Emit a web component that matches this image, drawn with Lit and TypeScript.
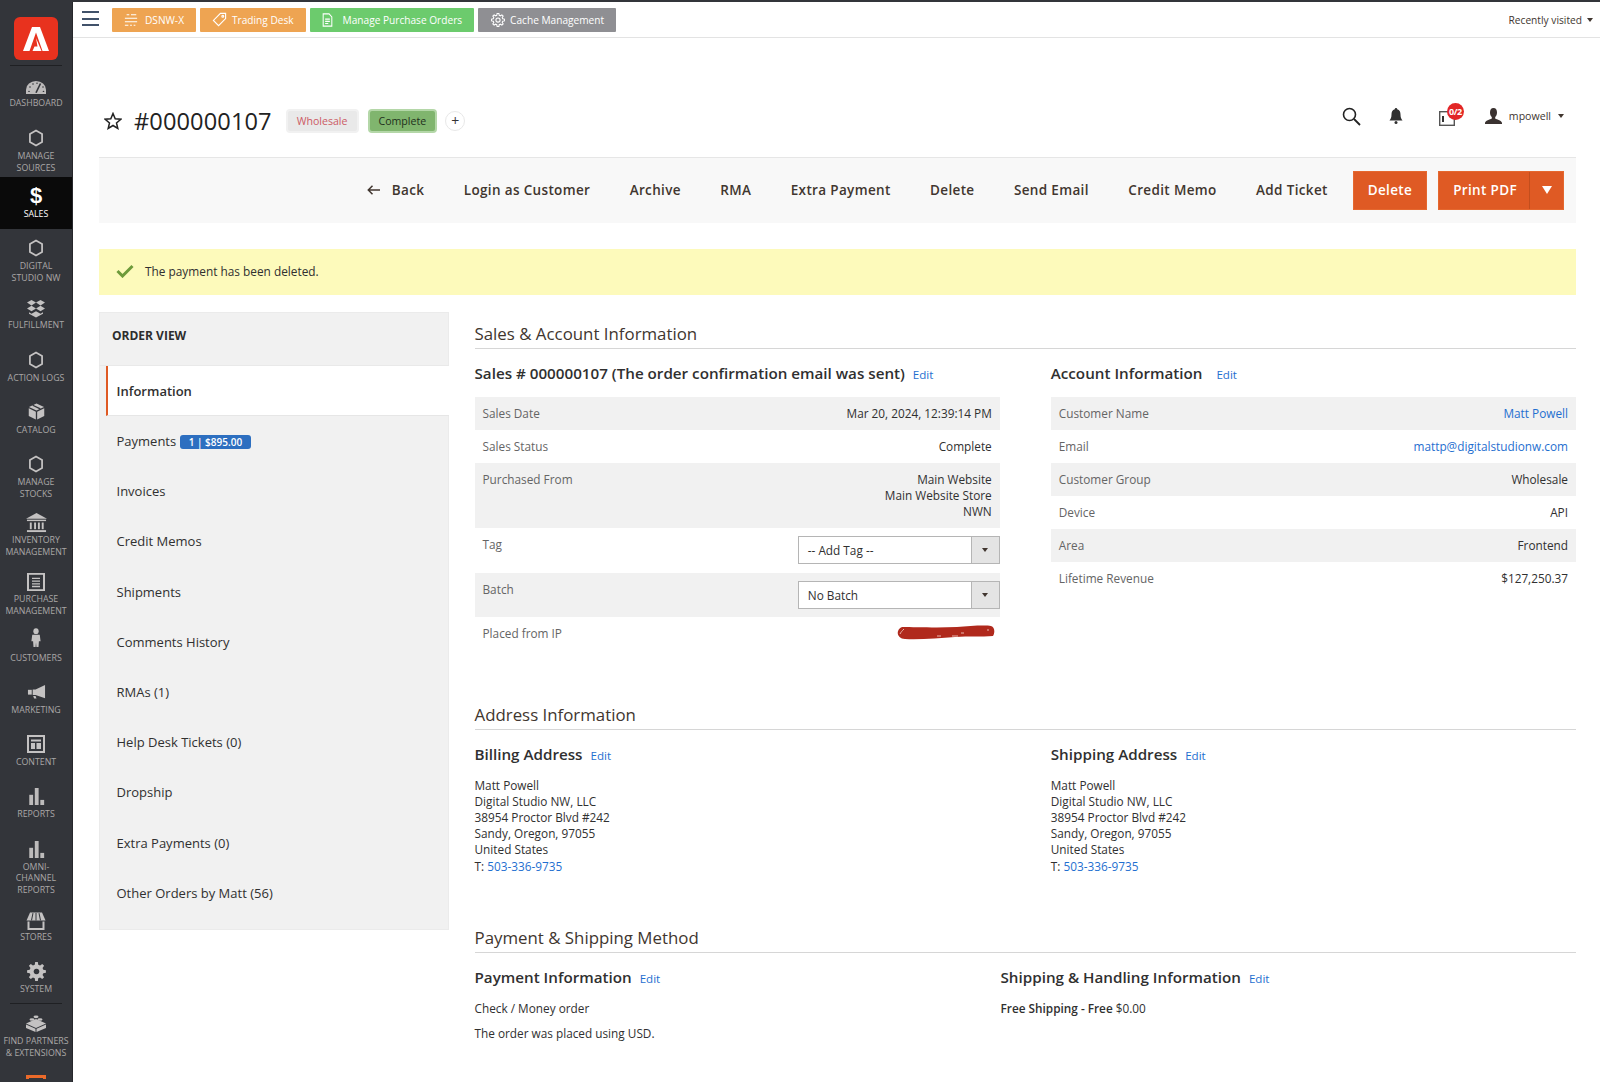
import { LitElement, html, css } from "lit";
import { customElement } from "lit/decorators.js";

const gearPath = (cx: number, cy: number, ro: number, ri: number, n: number) => {
  let d = "";
  for (let i = 0; i < n; i++) {
    const step = (Math.PI * 2) / n;
    const a = i * step - Math.PI / 2;
    const pts: [number, number][] = [
      [ri, a - step * 0.32],
      [ro, a - step * 0.18],
      [ro, a + step * 0.18],
      [ri, a + step * 0.32],
    ];
    for (const [r, t] of pts) {
      d += `${d ? "L" : "M"}${(cx + r * Math.cos(t)).toFixed(2)} ${(cy + r * Math.sin(t)).toFixed(2)} `;
    }
  }
  return d + "Z";
};

const hex = html`<svg width="16" height="18" viewBox="0 0 20 22"><path d="M10 1.600 17.600 6v10L10 20.400 2.400 16V6z" fill="none" stroke="#c4c2c2" stroke-width="2.200"/></svg>`;
const bars = html`<svg width="17" height="19" viewBox="0 0 20 22" fill="#bdbbbb"><rect x="1.500" y="9" width="4.500" height="12"/><rect x="8" y="1" width="4.500" height="20"/><rect x="14.500" y="15" width="4.500" height="6"/></svg>`;
const icons: Record<string, unknown> = {
  dashboard: html`<svg width="20" height="13" viewBox="0 0 20 15" preserveAspectRatio="none"><path d="M0 15V10A10 10 0 0 1 20 10V15z" fill="#bdbbbb"/><path d="M10 13.500 14.500 3" stroke="#33353a" stroke-width="1.600"/><g fill="#33353a"><circle cx="4" cy="7" r=".8"/><circle cx="7" cy="3.500" r=".8"/><circle cx="11" cy="2.500" r=".8"/><circle cx="17" cy="7" r=".8"/><circle cx="3" cy="12" r=".8"/><circle cx="17.500" cy="12" r=".8"/></g></svg>`,
  hex,
  dollar: html`<span class="dollar">$</span>`,
  fulfillment: html`<svg width="20" height="19" viewBox="0 0 20 20" preserveAspectRatio="none" fill="#c4c2c2"><path d="M5.500 1 10 3.800 5.500 6.800 1 3.800zM14.500 1 19 3.800 14.500 6.800 10 3.800zM5.500 7.200 10 10 5.500 13 1 10.100zM14.500 7.200 19 10.100 14.500 13 10 10z"/><path d="M3 14l2.500 1.500L10 13l4.500 2.500L17 14v1.500L10 19.500 3 15.500z"/></svg>`,
  cube: html`<svg width="17" height="17" viewBox="0 0 18 19" preserveAspectRatio="none" fill="#c4c2c2"><path d="M9 .5 17 4.500 9 8.500 1 4.500zM.8 5.800 8.300 9.700V18.500L.8 14.500zM17.200 5.800V14.500L9.700 18.500V9.700z"/><path d="M5 2.500 13 6.500" stroke="#33353a" stroke-width="1.500"/></svg>`,
  inventory: html`<svg width="21" height="20" viewBox="0 0 22 21" preserveAspectRatio="none" fill="#c4c2c2"><path d="M11 0 22 6H0z"/><rect x="1" y="7" width="20" height="1.500"/><rect x="4" y="10" width="2" height="7"/><rect x="8.500" y="10" width="2" height="7"/><rect x="12.500" y="10" width="2" height="7"/><rect x="16.500" y="10" width="2" height="7"/><rect x="1" y="18" width="20" height="2"/></svg>`,
  purchase: html`<svg width="18" height="18" viewBox="0 0 18 20" preserveAspectRatio="none"><rect x="1" y="1" width="16" height="18" fill="none" stroke="#c4c2c2" stroke-width="2"/><path d="M5 6h8M5 9h8M5 12h8M5 15h8" stroke="#c4c2c2" stroke-width="1.500"/></svg>`,
  customer: html`<svg width="10" height="20" viewBox="0 0 12 22" preserveAspectRatio="none" fill="#c4c2c2"><circle cx="6" cy="3.500" r="3.200"/><path d="M1.500 7.500h9l1 7H9.500L9 21H6.500L6 16 5.500 21H3L2.500 14.500H.5z"/></svg>`,
  marketing: html`<svg width="19" height="14" viewBox="0 0 20 16" preserveAspectRatio="none" fill="#c4c2c2"><path d="M19 0v15L9 11.500H6V5H9z"/><path d="M1 5.500h4V11H1z"/><path d="M6.500 12.500h2.500l1 3H7.500z"/></svg>`,
  content: html`<svg width="18" height="18" viewBox="0 0 18 18"><rect x="1" y="1" width="16" height="16" fill="none" stroke="#c4c2c2" stroke-width="2"/><path d="M4 4.500h10v2H4zM4 8h4v6H4zM9.500 8H14v6H9.500z" fill="#c4c2c2"/></svg>`,
  bars,
  stores: html`<svg width="20" height="18" viewBox="0 0 20 17" preserveAspectRatio="none"><path d="M4 .5h12L19.500 8H.5z" fill="#c4c2c2"/><path d="M7 1 5.500 8M10 1v7M13 1 14.500 8" stroke="#33353a" stroke-width="1"/><path d="M2.500 9v7h15V9" fill="none" stroke="#c4c2c2" stroke-width="2"/></svg>`,
  gear: html`<svg width="19" height="19" viewBox="0 0 20 20"><path fill-rule="evenodd" fill="#c4c2c2" d="${gearPath(10, 10, 10, 7.4, 8)} M10 7a3 3 0 1 0 .01 0z"/></svg>`,
  lego: html`<svg width="20" height="17" viewBox="0 0 20 19" preserveAspectRatio="none" fill="#c4c2c2"><path d="M10 4.500 20 9.500 10 14.500 0 9.500z"/><path d="M0 10.500 9.500 15.300V19L0 14.500zM20 10.500V14.500L10.500 19V15.300z"/><ellipse cx="6" cy="5" rx="2.500" ry="1.500"/><ellipse cx="14" cy="5" rx="2.500" ry="1.500"/><ellipse cx="10" cy="2" rx="2.500" ry="1.500"/></svg>`,
};

const iconGap: Record<string, number> = {
  dashboard: 4, hex: 4, dollar: 2, fulfillment: 2, cube: 5, inventory: 2, purchase: 3,
  customer: 5, marketing: 6, content: 4, bars: 3, stores: 2, gear: 3,
};

const nav: [string, string[], number, boolean?][] = [
  ["dashboard", ["DASHBOARD"], 46],
  ["hex", ["MANAGE", "SOURCES"], 65],
  ["dollar", ["SALES"], 52, true],
  ["hex", ["DIGITAL", "STUDIO NW"], 58],
  ["fulfillment", ["FULFILLMENT"], 47],
  ["hex", ["ACTION LOGS"], 53],
  ["cube", ["CATALOG"], 52],
  ["hex", ["MANAGE", "STOCKS"], 64],
  ["inventory", ["INVENTORY", "MANAGEMENT"], 58],
  ["purchase", ["PURCHASE", "MANAGEMENT"], 59],
  ["customer", ["CUSTOMERS"], 47],
  ["marketing", ["MARKETING"], 52],
  ["content", ["CONTENT"], 52],
  ["bars", ["REPORTS"], 52],
  ["bars", ["OMNI-", "CHANNEL", "REPORTS"], 76],
  ["stores", ["STORES"], 47],
  ["gear", ["SYSTEM"], 52],
];

const tabIcon = {
  list: html`<svg class="t-list" width="14" height="14" viewBox="0 0 16 16" stroke="#fff" stroke-width="1.300" fill="none"><path d="M3 2h3M8 2h6M1 6h14M1 10h14M1 14h4M7 14h2M11 14h2"/></svg>`,
  tag: html`<svg class="t-tag" width="15" height="15" viewBox="0 0 16 16" stroke="#fff" stroke-width="1.200" fill="none"><path d="M9 1.500h5.500V7L7 14.500 1.500 9z"/><circle cx="11.500" cy="4.500" r="1"/></svg>`,
  doc: html`<svg class="t-doc" width="11" height="14" viewBox="0 0 14 16" preserveAspectRatio="none" stroke="#fff" stroke-width="1.300" fill="none"><path d="M1.500 1h7.500l3.500 3.500V15h-11z"/><path d="M4 7h6M4 9.500h6M4 12h4"/></svg>`,
  gear: html`<svg class="t-gear" width="14" height="14" viewBox="0 0 16 16"><path fill="none" stroke="#fff" stroke-width="1.200" d="${gearPath(8, 8, 7.4, 5.6, 8)}"/><circle cx="8" cy="8" r="2.400" fill="none" stroke="#fff" stroke-width="1.200"/></svg>`,
};

@customElement("app-root")
export class AppRoot extends LitElement {
  static styles = css`
    :host { display: block; height: 1082px; overflow: hidden; font-family: "Open Sans", "Noto Sans", sans-serif; color: #303030; background: #fff; position: relative; }
    a { color: #1f6fd0; text-decoration: none; }
    .strip { height: 2px; background: #33353a; }
    .page { display: flex; height: 1080px; }
    .side { width: 73px; flex: none; background: #33353a; border-right: 1px solid #26272b; box-sizing: border-box; display: flex; flex-direction: column; align-items: stretch; overflow: hidden; }
    .logo-wrap { height: 64px; margin: 0 10px; padding-top: 15px; box-sizing: border-box; border-bottom: 1px solid #1f2023; display: flex; justify-content: center; flex: none; align-items: flex-start; }
    .logo { width: 44px; height: 43px; background: #e8321e; border-radius: 6px; display: flex; align-items: center; justify-content: center; }
    .nav-item { display: flex; flex-direction: column; align-items: center; justify-content: flex-end; padding-bottom: 3px; box-sizing: border-box; color: #aaa7a7; font-size: 8.800px; line-height: 11.500px; text-align: center; flex: none; white-space: nowrap; }
    .nav-item.active { background: #0a0a0a; color: #fff; padding-bottom: 9px; }
    .nav-item .ic { display: flex; align-items: center; justify-content: center; }
    .dollar { font-family: "Liberation Sans", sans-serif; font-size: 22px; font-weight: 700; color: #fff; line-height: 22px; }
    .rule { height: 1px; margin: 5px 10px 0; background: #1f2023; flex: none; }
    .orange-peek { width: 20px; height: 4px; border: 3px solid #eb6a2a; border-bottom: none; margin: 13px 0 0 26px; box-sizing: border-box; flex: none; }

    .main { flex: 1; min-width: 0; display: flex; flex-direction: column; }
    .topbar { height: 29px; border-bottom: 1px solid #e3e3e3; display: flex; align-items: flex-start; flex: none; padding: 6px 7px 0 9px; }
    .burger { width: 17px; height: 15px; margin: 3px 13px 0 0; flex: none; display: flex; flex-direction: column; justify-content: space-between; }
    .burger i { display: block; height: 2px; background: #41526a; }
    .tab { height: 24px; display: flex; align-items: center; padding: 0 12px 1px 12px; margin-right: 4px; color: #fff; font-size: 10.150px; border-radius: 1px; box-sizing: border-box; white-space: nowrap; }
    .tab.o { background: #eea452; }
    .tab.g { background: #6ccb6d; }
    .tab.n { background: #8f8f93; padding-left: 13px; }
    .t-list { margin-right: 7px; }
    .t-tag { margin-right: 5px; }
    .t-doc { margin-right: 10px; }
    .t-gear { margin-right: 5px; }
    .recent { margin-left: auto; font-size: 10.200px; color: #41362f; height: 24px; padding-bottom: 1px; box-sizing: border-box; display: flex; align-items: center; gap: 5px; white-space: nowrap; }
    .caret { display: inline-block; width: 0; height: 0; border: 3.500px solid transparent; border-top: 4px solid #41362f; border-bottom: none; }

    .content { padding: 0 24px 0 26px; flex: 1; min-height: 0; }
    .head { height: 119px; display: flex; align-items: flex-end; }
    .head-in { display: flex; align-items: center; height: 34px; width: 100%; margin-bottom: 19px; }
    .star { margin: 0 12px 0 5px; flex: none; }
    .h1 { font-size: 23.600px; color: #222; line-height: 34px; margin-right: 16px; letter-spacing: .1px; }
    .chip { height: 20px; font-size: 10.600px; display: flex; align-items: center; padding: 0 9px; box-sizing: border-box; border-radius: 2px; }
    .chip.w { background: #e9e9e9; color: #cc5b65; box-shadow: 0 0 0 2px #f1f1f1; margin-right: 13px; }
    .chip.c { background: #80b56e; color: #22301c; box-shadow: 0 0 0 2px #b4d7a8; margin-right: 10px; }
    .plus { width: 20px; height: 20px; border-radius: 50%; border: 1px solid #e8e8e8; display: flex; align-items: center; justify-content: center; font-size: 14px; color: #333; box-sizing: border-box; line-height: 1; }
    .tools { display: flex; align-items: center; height: 34px; margin: 0 12px 10px auto; }
    .msg-ic { position: relative; margin-right: 21px; width: 25px; height: 20px; }
    .badge { position: absolute; left: 8px; top: -3px; width: 17px; height: 17px; border-radius: 50%; background: #e22626; color: #fff; font-size: 9px; font-weight: 700; display: flex; align-items: center; justify-content: center; letter-spacing: -.5px; }
    .user { font-size: 10.600px; color: #41362f; margin: 0 7px 0 7px; }
    .i-search { margin-right: 28px; }
    .i-bell { margin-right: 36px; }
    .i-box { position: absolute; left: 0; top: 5px; }

    .actions { height: 66px; background: #f8f8f8; border-top: 1px solid #e6e6e6; display: flex; align-items: center; justify-content: flex-end; padding: 0 12px 1px 0; box-sizing: border-box; font-size: 13.500px; font-weight: 600; color: #41362f; letter-spacing: .35px; white-space: nowrap; }
    .actions .a { margin-right: 39.400px; display: flex; align-items: center; gap: 12px; }
    .actions .a.last { margin-right: 25px; }
    .btn { height: 39px; background: #df5a24; color: #fff; display: flex; align-items: center; border: 1px solid #e5682f; box-sizing: border-box; }
    .btn.del { padding: 0 14px; margin-right: 11px; }
    .btn.pdf span { padding: 0 12px 0 14px; line-height: 37px; border-right: 1px solid #c34e1d; }
    .btn.pdf b { width: 33px; display: flex; justify-content: center; }
    .tri { width: 0; height: 0; border: 5.500px solid transparent; border-top: 8px solid #fff; border-bottom: none; }

    .msg { margin-top: 26px; height: 46px; background: #fdfabb; display: flex; align-items: center; padding: 0 0 2px 17px; box-sizing: border-box; font-size: 11.850px; color: #303030; gap: 11px; }

    .cols { display: flex; margin-top: 17px; }
    .panel { width: 350px; height: 618px; background: #f1f1f1; box-shadow: 0 0 0 1px #ebebeb inset; flex: none; margin-right: 25.500px; }
    .panel-h { height: 54px; font-size: 12px; font-weight: 700; color: #2d2d2d; display: flex; align-items: center; padding: 0 0 6px 13px; border-bottom: 1px solid #e9e9e9; box-sizing: border-box; }
    .pi { height: 50.200px; display: flex; align-items: center; padding-left: 17.500px; font-size: 13px; color: #303030; gap: 4px; white-space: nowrap; }
    .pi.on { margin-left: 7px; padding-left: 8.500px; background: #fff; border-left: 2.500px solid #df5a24; font-weight: 600; border-bottom: 1px solid #e6e6e6; box-sizing: border-box; height: 50px; }
    .count { display: inline-block; background: #2d6fc0; color: #fff; font-size: 10px; font-weight: 600; line-height: 14px; padding: 0 8.500px; margin-top: 2px; border-radius: 3px; }

    .right { flex: 1; min-width: 0; }
    .sec { font-size: 16.850px; line-height: 24px; color: #41362f; border-bottom: 1px solid #d6d6d6; box-sizing: border-box; margin: 0; font-weight: 400; padding-top: 10px; height: 37px; }
    .row2 { display: flex; gap: 51px; margin-top: 12px; }
    .row2 > div { flex: 1 1 0; min-width: 0; }
    .r-top { height: 331.500px; }
    .r-addr { height: 174px; }
    .r-pay { gap: 0; }
    .r-pay > .pay-left { flex: none; width: 526px; }
    .sub { font-size: 15.200px; font-weight: 600; color: #303030; line-height: 24px; white-space: nowrap; }
    .sub a { font-size: 11.600px; font-weight: 400; margin-left: 4px; }
    .sub a.wide { margin-left: 10px; }
    .tbl { margin-top: 10px; font-size: 11.800px; color: #303030; }
    .tr { display: flex; justify-content: space-between; padding: 8px; line-height: 16.200px; box-sizing: border-box; }
    .tr:nth-child(odd) { background: #f1f1f1; }
    .tr .l { color: #656565; }
    .tr .v { text-align: right; }
    .sel { width: 202px; height: 28px; display: flex; border: 1px solid #b5b5b5; background: #fff; box-sizing: border-box; margin: 0 -8px 0 0; align-items: stretch; text-align: left; }
    .sel span { flex: 1; padding-left: 9px; line-height: 26px; }
    .sel i { width: 27px; background: #e4e4e4; border-left: 1px solid #b5b5b5; display: flex; align-items: center; justify-content: center; }
    .addr { font-size: 11.800px; line-height: 16.200px; margin-top: 9px; color: #303030; }
    .addr b { font-weight: 600; }
    .scrib { display: block; margin: 0 -3px 0 0; }
  `;

  private row(l: string, v: unknown, h: number) {
    return html`<div class="tr" style="height:${h}px"><span class="l">${l}</span><span class="v">${v}</span></div>`;
  }

  private address() {
    return html`<div class="addr">Matt Powell<br />Digital Studio NW, LLC<br />38954 Proctor Blvd #242<br />Sandy, Oregon, 97055<br />United States<br />T: <a href="#">503-336-9735</a></div>`;
  }

  render() {
    return html`
      <div class="strip"></div>
      <div class="page">
        <aside class="side">
          <div class="logo-wrap"><div class="logo"><svg width="26" height="24" viewBox="0 0 26 24" fill="#fff"><path d="M9 0h8l9 24h-6.500L13 5.500 6.500 24H0z"/><path d="M13 11l5.500 13H9.500l2-4.500h3z"/></svg></div></div>
          ${nav.map(([ic, lines, h, on]) => html`
            <div class="nav-item ${on ? "active" : ""}" style="height:${h}px">
              <div class="ic" style="margin-bottom:${iconGap[ic]}px">${icons[ic]}</div>
              ${lines.map((l) => html`<div>${l}</div>`)}
            </div>`)}
          <div class="rule"></div>
          <div class="nav-item" style="height:58px">
            <div class="ic" style="margin-bottom:4px">${icons.lego}</div>
            <div>FIND PARTNERS</div><div>&amp; EXTENSIONS</div>
          </div>
          <div class="orange-peek"></div>
        </aside>
        <div class="main">
          <header class="topbar">
            <div class="burger"><i></i><i></i><i></i></div>
            <div class="tab o">${tabIcon.list}<span>DSNW-X</span></div>
            <div class="tab o">${tabIcon.tag}<span>Trading Desk</span></div>
            <div class="tab g">${tabIcon.doc}<span>Manage Purchase Orders</span></div>
            <div class="tab n">${tabIcon.gear}<span>Cache Management</span></div>
            <div class="recent">Recently visited <span class="caret"></span></div>
          </header>
          <div class="content">
            <div class="head"><div class="head-in">
              <svg class="star" width="18" height="18" viewBox="0 0 18 18"><path d="M9 1.500 11.200 6.700 16.800 7.200 12.500 10.900 13.800 16.400 9 13.500 4.200 16.400 5.500 10.900 1.200 7.200 6.800 6.700z" fill="none" stroke="#222" stroke-width="1.500"/></svg>
              <div class="h1">#000000107</div>
              <div class="chip w">Wholesale</div>
              <div class="chip c">Complete</div>
              <div class="plus">+</div>
              <div class="tools">
                <svg class="i-search" width="19" height="19" viewBox="0 0 19 19"><circle cx="7.500" cy="7.500" r="6" fill="none" stroke="#222" stroke-width="1.600"/><path d="M12 12l6 6" stroke="#222" stroke-width="1.800"/></svg>
                <svg class="i-bell" width="14" height="16" viewBox="0 0 14 16" fill="#303030"><path d="M7 0a1.200 1.200 0 0 1 1.200 1.300C10.800 2 11.500 4 11.500 6.500c0 3 .7 4.500 2 6H.5c1.300-1.500 2-3 2-6C2.500 4 3.200 2 5.800 1.300A1.200 1.200 0 0 1 7 0z"/><circle cx="7" cy="14.500" r="1.500"/></svg>
                <div class="msg-ic">
                  <svg class="i-box" width="16" height="15" viewBox="0 0 16 15"><rect x=".7" y=".7" width="14.600" height="13.600" fill="none" stroke="#555" stroke-width="1.400"/><path d="M4 5v6" stroke="#333" stroke-width="2"/></svg>
                  <div class="badge">0/2</div>
                </div>
                <svg width="17" height="16" viewBox="0 0 17 16" fill="#3a3230"><path d="M8.500 0C11 0 12 2 12 4.500c0 2-.8 3.500-1.800 4.500v1.500C12 11.500 17 12.500 17 15v1H0v-1c0-2.500 5-3.500 6.800-4.500V9C5.800 8 5 6.500 5 4.500 5 2 6 0 8.500 0z"/></svg>
                <span class="user">mpowell</span><span class="caret"></span>
              </div>
            </div></div>

            <div class="actions">
              <div class="a"><svg width="13" height="10" viewBox="0 0 13 10" fill="none" stroke="#41362f" stroke-width="1.500"><path d="M13 5H1.500M5.500 .8 1.300 5l4.200 4.200"/></svg>Back</div>
              <div class="a">Login as Customer</div>
              <div class="a">Archive</div>
              <div class="a">RMA</div>
              <div class="a">Extra Payment</div>
              <div class="a">Delete</div>
              <div class="a">Send Email</div>
              <div class="a">Credit Memo</div>
              <div class="a last">Add Ticket</div>
              <div class="btn del">Delete</div>
              <div class="btn pdf"><span>Print PDF</span><b><i class="tri"></i></b></div>
            </div>

            <div class="msg">
              <svg width="18" height="14" viewBox="0 0 18 14"><path d="M1.500 7 6.500 12 16.500 2" fill="none" stroke="#6d9a3a" stroke-width="3"/></svg>
              <span>The payment has been deleted.</span>
            </div>

            <div class="cols">
              <nav class="panel">
                <div class="panel-h">ORDER VIEW</div>
                <div class="pi on">Information</div>
                <div class="pi">Payments <span class="count">1 | $895.00</span></div>
                <div class="pi">Invoices</div>
                <div class="pi">Credit Memos</div>
                <div class="pi">Shipments</div>
                <div class="pi">Comments History</div>
                <div class="pi">RMAs (1)</div>
                <div class="pi">Help Desk Tickets (0)</div>
                <div class="pi">Dropship</div>
                <div class="pi">Extra Payments (0)</div>
                <div class="pi">Other Orders by Matt (56)</div>
              </nav>

              <div class="right">
                <h2 class="sec">Sales &amp; Account Information</h2>
                <div class="row2 r-top">
                  <div>
                    <div class="sub">Sales # 000000107 (The order confirmation email was sent) <a href="#">Edit</a></div>
                    <div class="tbl">
                      ${this.row("Sales Date", "Mar 20, 2024, 12:39:14 PM", 33)}
                      ${this.row("Sales Status", "Complete", 33)}
                      ${this.row("Purchased From", html`Main Website<br />Main Website Store<br />NWN`, 65)}
                      ${this.row("Tag", html`<div class="sel"><span>-- Add Tag --</span><i><b class="caret"></b></i></div>`, 45)}
                      ${this.row("Batch", html`<div class="sel"><span>No Batch</span><i><b class="caret"></b></i></div>`, 44)}
                      ${this.row("Placed from IP", html`<svg class="scrib" width="98" height="16" viewBox="0 0 98 16"><path d="M5 2C18 2 40 3 60 2c12-1 28-2 34-1 4 1 4 7 2 10-12 1-24 0-38 1-16 1-36 3-50 2C0 14-2 5 5 2z" fill="#b0291c"/><path d="M3 9c1-2 2-3 4-5M40 11h4M55 11h6M64 8h3M90 5h2" stroke="#e9b7ae" stroke-width="1" fill="none"/></svg>`, 33)}
                    </div>
                  </div>
                  <div>
                    <div class="sub">Account Information <a class="wide" href="#">Edit</a></div>
                    <div class="tbl">
                      ${this.row("Customer Name", html`<a href="#">Matt Powell</a>`, 33)}
                      ${this.row("Email", html`<a href="#">mattp@digitalstudionw.com</a>`, 33)}
                      ${this.row("Customer Group", "Wholesale", 33)}
                      ${this.row("Device", "API", 33)}
                      ${this.row("Area", "Frontend", 33)}
                      ${this.row("Lifetime Revenue", "$127,250.37", 33)}
                    </div>
                  </div>
                </div>

                <h2 class="sec">Address Information</h2>
                <div class="row2 r-addr">
                  <div>
                    <div class="sub">Billing Address <a href="#">Edit</a></div>
                    ${this.address()}
                  </div>
                  <div>
                    <div class="sub">Shipping Address <a href="#">Edit</a></div>
                    ${this.address()}
                  </div>
                </div>

                <h2 class="sec">Payment &amp; Shipping Method</h2>
                <div class="row2 r-pay">
                  <div class="pay-left">
                    <div class="sub">Payment Information <a href="#">Edit</a></div>
                    <div class="addr">Check / Money order</div>
                    <div class="addr">The order was placed using USD.</div>
                  </div>
                  <div>
                    <div class="sub">Shipping &amp; Handling Information <a href="#">Edit</a></div>
                    <div class="addr"><b>Free Shipping - Free</b> $0.00</div>
                  </div>
                </div>
              </div>
            </div>
          </div>
        </div>
      </div>
    `;
  }
}
